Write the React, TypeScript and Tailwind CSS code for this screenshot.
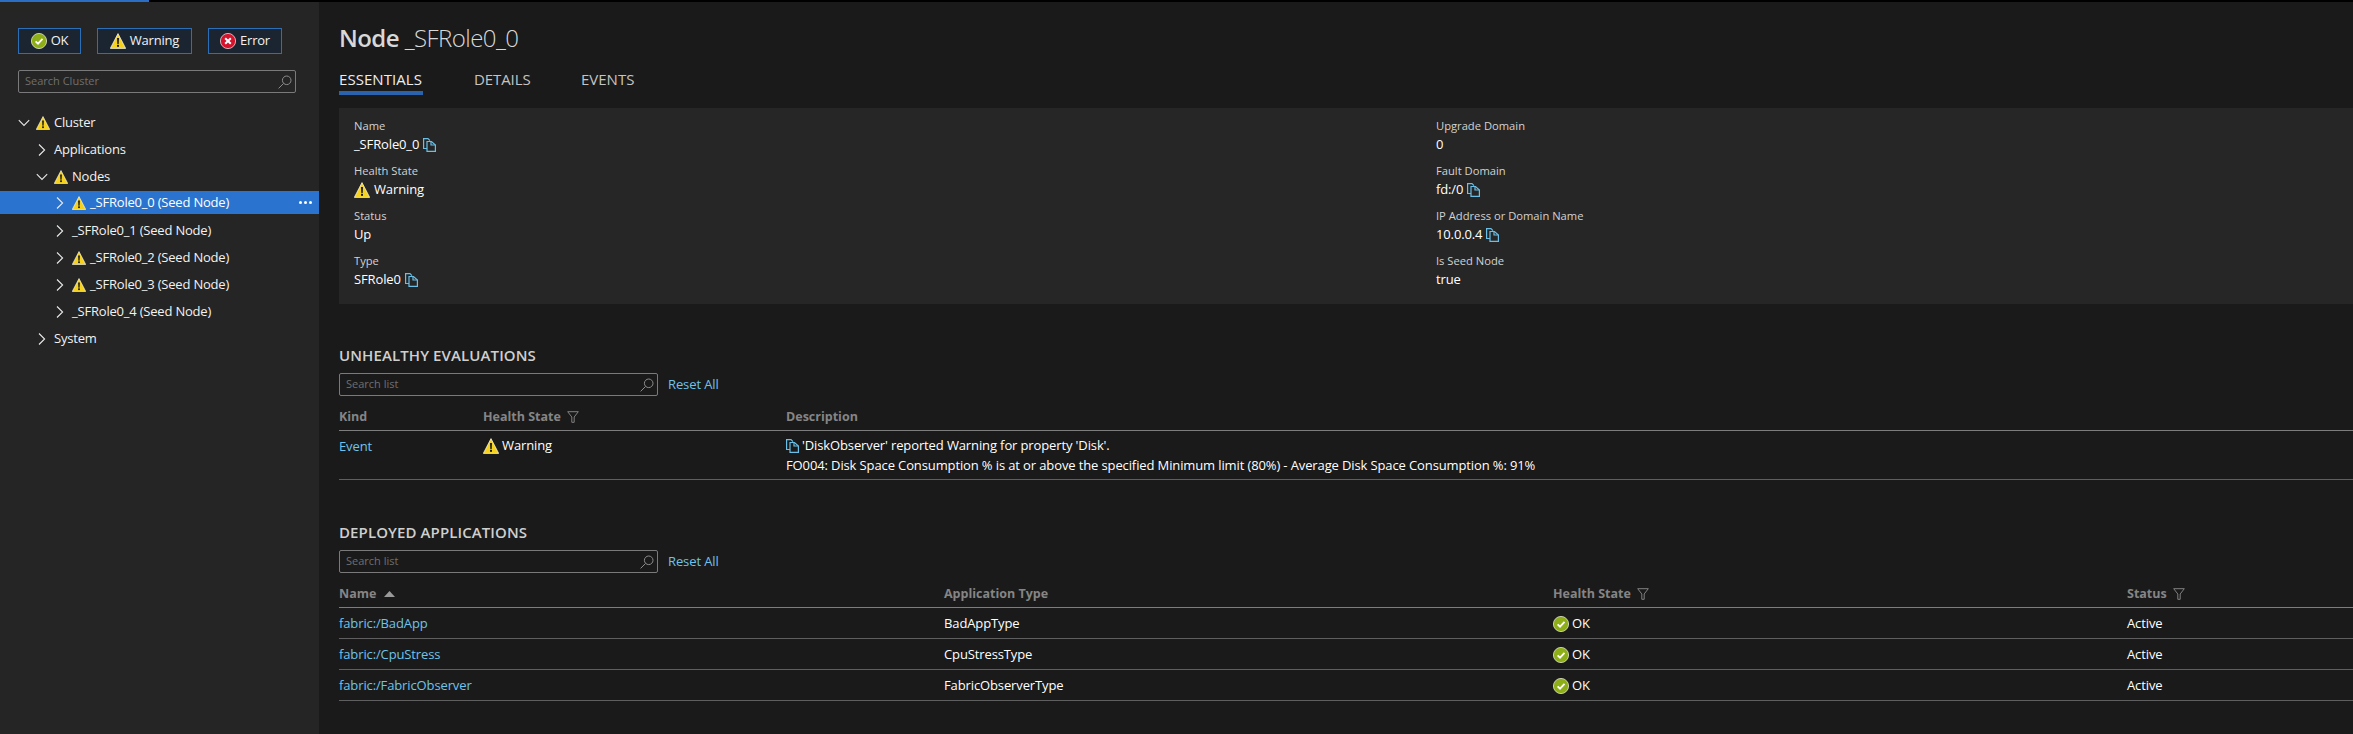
import React from "react";

const font = "font-['Open_Sans','Noto_Sans',sans-serif]";

const WarningIcon = ({ size = 16 }: { size?: number }) => (
  <svg width={size} height={size} viewBox="0 0 16 16" className="shrink-0">
    <path d="M8 .6 15.7 15.4H.3Z" fill="#f6d21d" stroke="#fff" strokeWidth="0.7" strokeLinejoin="round" />
    <path d="M7 5h2l-.3 6H7.3Z" fill="#1a1a1a" />
    <rect x="7" y="11.8" width="2" height="2" fill="#1a1a1a" />
  </svg>
);

const OkIcon = ({ size = 16 }: { size?: number }) => (
  <svg width={size} height={size} viewBox="0 0 16 16" className="shrink-0">
    <circle cx="8" cy="8" r="7.6" fill="#8dae17" stroke="#e4eac8" strokeWidth="0.8" />
    <path d="M4.6 8.3 7 10.6 11.5 5.8" fill="none" stroke="#fff" strokeWidth="1.8" />
  </svg>
);

const ErrorIcon = ({ size = 16 }: { size?: number }) => (
  <svg width={size} height={size} viewBox="0 0 16 16" className="shrink-0">
    <circle cx="8" cy="8" r="7.6" fill="#d6132d" stroke="#f3d4d8" strokeWidth="0.8" />
    <path d="M5.2 5.2 10.8 10.8M10.8 5.2 5.2 10.8" fill="none" stroke="#fff" strokeWidth="2" />
  </svg>
);

const CopyIcon = () => (
  <svg width="13" height="14" viewBox="0 0 13 14" fill="none" stroke="#69bfe6" strokeWidth="1.2" className="shrink-0">
    <path d="M4 10.5H.6V.6h4.4l2 2" />
    <path d="M4 3.5h4.5l3.9 3.5v6.4H4Z" />
    <path d="M8 3.5V7h4.4" />
  </svg>
);

const SearchIcon = () => (
  <svg width="14" height="14" viewBox="0 0 14 14" fill="none" stroke="#8c8c8c" strokeWidth="1" className="shrink-0">
    <circle cx="8.7" cy="5.3" r="4.3" />
    <path d="M5.6 8.4.6 13.4" />
  </svg>
);

const FilterIcon = () => (
  <svg width="12" height="12" viewBox="0 0 12 12" fill="none" stroke="#8c8c8c" strokeWidth="0.9" className="shrink-0">
    <path d="M.7.7h10.6L7.2 6v5.3H4.8V6Z" />
  </svg>
);

const Chevron = ({ open }: { open?: boolean }) => (
  <svg width="12" height="12" viewBox="0 0 12 12" fill="none" stroke="#e8e8e8" strokeWidth="1.1" className="shrink-0">
    {open ? <path d="M.8 3.2 6 8.4 11.2 3.2" /> : <path d="M3 .5 8.6 6 3 11.5" />}
  </svg>
);

const SearchBox = ({ placeholder, className }: { placeholder: string; className: string }) => (
  <div className={`flex h-[23px] items-center justify-between rounded-[2px] border border-[#7a7a7a] pl-[6px] pr-[3px] ${className}`}>
    <span className="text-[11px] text-[#6f6f6f]">{placeholder}</span>
    <SearchIcon />
  </div>
);

const treeRows = [
  { label: "Cluster", indent: "pl-[18px]", open: true, warn: true },
  { label: "Applications", indent: "pl-[36px]" },
  { label: "Nodes", indent: "pl-[36px]", open: true, warn: true },
  { label: "_SFRole0_0 (Seed Node)", indent: "pl-[54px]", warn: true, selected: true },
  { label: "_SFRole0_1 (Seed Node)", indent: "pl-[54px]" },
  { label: "_SFRole0_2 (Seed Node)", indent: "pl-[54px]", warn: true },
  { label: "_SFRole0_3 (Seed Node)", indent: "pl-[54px]", warn: true },
  { label: "_SFRole0_4 (Seed Node)", indent: "pl-[54px]" },
  { label: "System", indent: "pl-[36px]" },
];

const Sidebar = () => (
  <aside className="flex w-[319px] shrink-0 flex-col bg-[#252525]">
    <div className="flex gap-4 pl-[18px] pt-[26px] tracking-[-0.2px]">
      <button className="flex h-[26px] w-[63px] items-center justify-center gap-[4px] border border-[#2a6fb8] bg-[#1b2531] text-[13px] text-[#f2f2f2]">
        <OkIcon />OK
      </button>
      <button className="flex h-[26px] w-[95px] items-center justify-center gap-[4px] border border-[#2a6fb8] bg-[#1b2531] text-[13px] text-[#f2f2f2]">
        <WarningIcon />Warning
      </button>
      <button className="flex h-[26px] w-[74px] items-center justify-center gap-[4px] border border-[#2a6fb8] bg-[#1b2531] text-[13px] text-[#f2f2f2]">
        <ErrorIcon />Error
      </button>
    </div>
    <div className="pl-[18px] pt-4">
      <SearchBox placeholder="Search Cluster" className="w-[278px]" />
    </div>
    <div className="flex flex-col pt-4 tracking-[-0.2px]">
      {treeRows.map((row) => (
        <div
          key={row.label}
          className={`relative flex items-center text-[13px] text-[#f2f2f2] ${row.indent} ${
            row.selected ? "mb-[3px] mt-[1px] h-[23px] bg-[#2a74cf] text-white" : "h-[27px]"
          }`}
        >
          <span className="w-[18px] shrink-0">
            <Chevron open={row.open} />
          </span>
          {row.warn && (
            <span className="mr-[4px]">
              <WarningIcon size={14} />
            </span>
          )}
          <span>{row.label}</span>
          {row.selected && (
            <span className="absolute right-[7px] flex gap-[2px]">
              <i className="h-[3px] w-[3px] rounded-full bg-white" />
              <i className="h-[3px] w-[3px] rounded-full bg-white" />
              <i className="h-[3px] w-[3px] rounded-full bg-white" />
            </span>
          )}
        </div>
      ))}
    </div>
  </aside>
);

const Field = ({ label, children }: { label: string; children: React.ReactNode }) => (
  <div className="flex h-[45px] flex-col">
    <span className="h-[18px] text-[11.2px] leading-[18px] text-[#d2d2d2]">{label}</span>
    <span className="flex h-[20px] items-center gap-[4px] text-[13px] tracking-[-0.13px] text-white">{children}</span>
  </div>
);

const SectionHead = ({ title }: { title: string }) => (
  <>
    <h2 className="h-[18px] text-[15px] font-semibold leading-[18px] tracking-[0.1px] text-[#cfcfcf]">{title}</h2>
    <div className="mt-[9px] flex items-center">
      <SearchBox placeholder="Search list" className="w-[319px]" />
      <a className="ml-[10px] text-[13px] tracking-[-0.1px] text-[#6fc3ea]">Reset All</a>
    </div>
  </>
);

const apps = [
  { name: "fabric:/BadApp", type: "BadAppType" },
  { name: "fabric:/CpuStress", type: "CpuStressType" },
  { name: "fabric:/FabricObserver", type: "FabricObserverType" },
];

export default function App() {
  return (
    <div className={`flex h-[734px] w-[2353px] flex-col overflow-hidden bg-[#1a1a1a] ${font}`}>
      <div className="h-[2px] shrink-0 bg-black">
        <div className="h-full w-[149px] bg-[#2a6fc4]" />
      </div>
      <div className="flex min-h-0 flex-1">
        <Sidebar />
        <main className="min-w-0 flex-1 pl-5 pt-[19px]">
          <h1 className="h-[34px] text-[24px] leading-[34px] tracking-[-0.55px] text-[#d8d8d8]">
            <span className="font-semibold">Node</span> <span className="font-light">_SFRole0_0</span>
          </h1>
          <div className="mt-[13px] flex h-[27px] text-[15px] leading-[22px] text-[#c4c4c4]">
            <span className="w-[84px] border-b-[4px] border-[#2a62ae] pb-px tracking-[0.05px] text-[#ededed]">ESSENTIALS</span>
            <span className="ml-[51px] w-[56px] tracking-[-0.1px]">DETAILS</span>
            <span className="ml-[51px]">EVENTS</span>
          </div>
          <section className="mt-[13px] grid h-[196px] grid-cols-[1082px_1fr] bg-[#262626] pl-[15px] pt-[9px]">
            <div>
              <Field label="Name">_SFRole0_0<CopyIcon /></Field>
              <Field label="Health State"><WarningIcon />Warning</Field>
              <Field label="Status">Up</Field>
              <Field label="Type">SFRole0<CopyIcon /></Field>
            </div>
            <div>
              <Field label="Upgrade Domain">0</Field>
              <Field label="Fault Domain">fd:/0<CopyIcon /></Field>
              <Field label="IP Address or Domain Name">10.0.0.4<CopyIcon /></Field>
              <Field label="Is Seed Node">true</Field>
            </div>
          </section>

          <section className="mt-[42px]">
            <SectionHead title="UNHEALTHY EVALUATIONS" />
            <div className="mt-[9px] grid h-[26px] grid-cols-[144px_303px_1fr] items-center border-b border-[#7d7d7d] pb-px text-[12.5px] font-bold text-[#858585]">
              <span>Kind</span>
              <span className="flex items-center gap-[6px]">Health State <FilterIcon /></span>
              <span>Description</span>
            </div>
            <div className="grid h-[49px] grid-cols-[144px_303px_1fr] border-b border-[#5f5f5f] pt-[5px] text-[13px] tracking-[-0.12px] text-white">
              <a className="leading-[20px] text-[#6fc3ea]">Event</a>
              <span className="flex h-[20px] items-center gap-[3px]"><WarningIcon />Warning</span>
              <div>
                <div className="flex h-[20px] items-center gap-[3px]"><CopyIcon />'DiskObserver' reported Warning for property 'Disk'.</div>
                <div className="h-[19px] leading-[19px]">FO004: Disk Space Consumption % is at or above the specified Minimum limit (80%) - Average Disk Space Consumption %: 91%</div>
              </div>
            </div>
          </section>

          <section className="mt-[43px]">
            <SectionHead title="DEPLOYED APPLICATIONS" />
            <div className="mt-[9px] grid h-[26px] grid-cols-[605px_609px_574px_1fr] items-center border-b border-[#7d7d7d] pb-px text-[12.5px] font-bold text-[#858585]">
              <span className="flex items-center gap-[8px]">
                Name
                <svg width="11" height="6" viewBox="0 0 11 6"><path d="M5.5 0 11 6H0Z" fill="#9a9a9a" /></svg>
              </span>
              <span>Application Type</span>
              <span className="flex items-center gap-[6px]">Health State <FilterIcon /></span>
              <span className="flex items-center gap-[6px]">Status <FilterIcon /></span>
            </div>
            {apps.map((app) => (
              <div key={app.name} className="grid h-[31px] grid-cols-[605px_609px_574px_1fr] items-center border-b border-[#5f5f5f] pt-px text-[13px] tracking-[-0.12px] text-white">
                <a className="text-[#6fc3ea]">{app.name}</a>
                <span>{app.type}</span>
                <span className="flex items-center gap-[3px]"><OkIcon />OK</span>
                <span>Active</span>
              </div>
            ))}
          </section>
        </main>
      </div>
    </div>
  );
}
